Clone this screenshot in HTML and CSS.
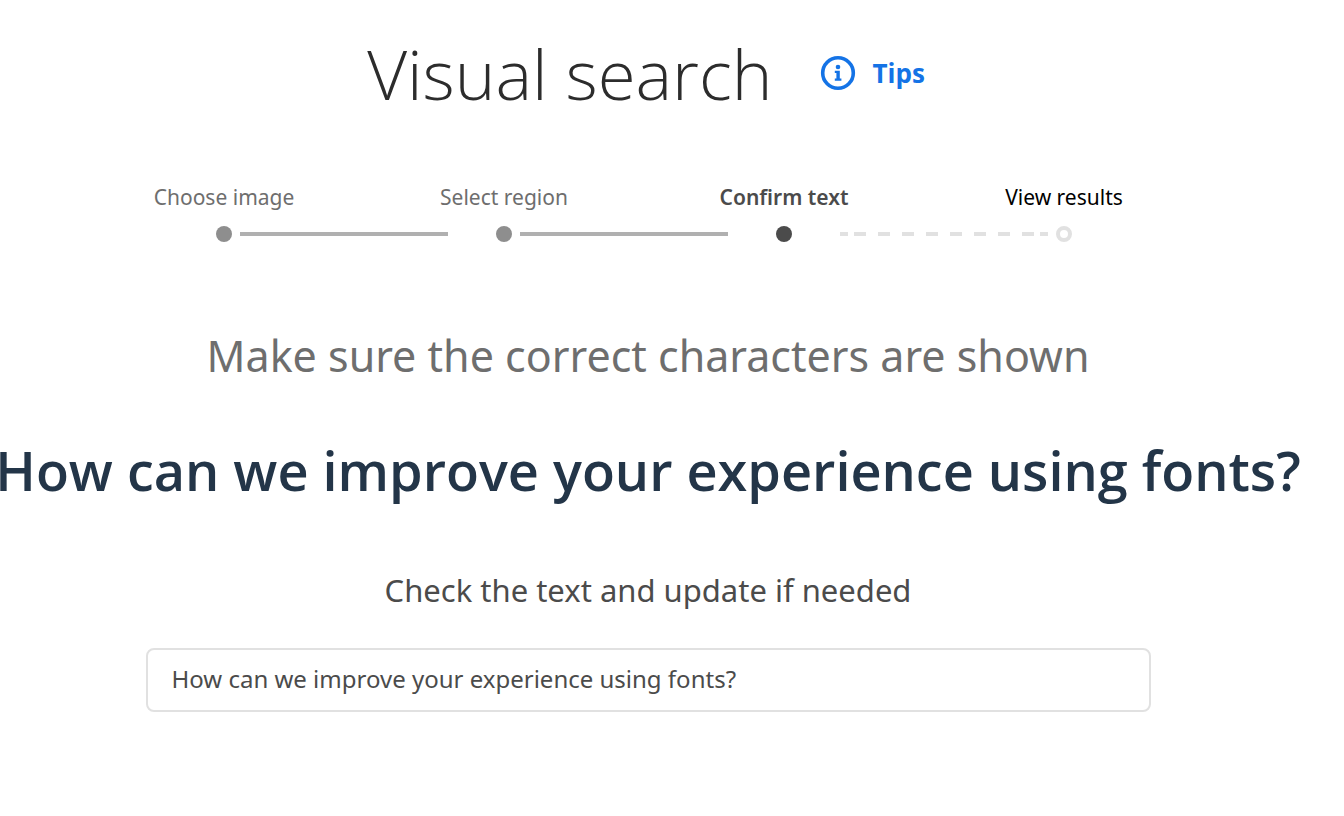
FILE: index.html
```html
<!DOCTYPE html>
<html lang="en">
<head>
<meta charset="utf-8">
<meta name="viewport" content="width=device-width, initial-scale=1">
<title>Visual search</title>
<link rel="stylesheet" href="styles.css">
</head>
<body>
<main class="page">
  <header class="header">
    <h1 class="title">Visual search</h1>
    <button class="tips" type="button">
      <svg class="tips-icon" viewBox="0 0 36 36" aria-hidden="true">
        <circle cx="18" cy="18" r="15.3" fill="none" stroke="currentColor" stroke-width="3.6"/>
        <circle cx="18" cy="12" r="2.3" fill="currentColor"/>
        <path d="M14.8 15.8h5v7.8h1.6v2.2h-6.6v-2.2h1.6V18h-1.6z" fill="currentColor"/>
      </svg>
      <span>Tips</span>
    </button>
  </header>
  <ol class="steps">
    <li class="step done"><span class="label">Choose image</span><span class="dot"></span></li>
    <li class="step done"><span class="label">Select region</span><span class="dot"></span></li>
    <li class="step current" aria-current="step"><span class="label">Confirm text</span><span class="dot"></span></li>
    <li class="step next"><span class="label">View results</span><span class="dot"></span></li>
  </ol>
  <h2 class="heading">Make sure the correct characters are shown</h2>
  <p class="sample">How can we improve your experience using fonts?</p>
  <form class="form">
    <label class="prompt" for="text">Check the text and update if needed</label>
    <input class="field" id="text" type="text" value="How can we improve your experience using fonts?">
  </form>
</main>
</body>
</html>
```
FILE: styles.css
```css
* {
  box-sizing: border-box;
}

body {
  margin: 0;
  background: #fff;
  color: #4b4b4b;
  font-family: "Noto Sans", "Open Sans", sans-serif;
}

.page {
  display: flex;
  flex-direction: column;
  align-items: center;
  padding: 24px 48px 48px 0;
}

.header {
  display: flex;
  align-items: center;
  gap: 48px;
  padding-right: 4px;
}

.title {
  margin: 0;
  color: #2c2c2c;
  font-family: "Open Sans", sans-serif;
  font-size: 69px;
  font-weight: 330;
  line-height: 98px;
}

.tips {
  display: flex;
  align-items: center;
  gap: 16px;
  padding: 0;
  border: 0;
  background: none;
  color: #1473e6;
  font-family: "Open Sans", sans-serif;
  font-size: 26px;
  font-weight: 700;
}

.tips-icon {
  width: 36px;
  height: 36px;
}

.steps {
  display: grid;
  grid-template-columns: repeat(4, 280px);
  margin: 57px 0 0;
  padding: 0 8px 0 0;
  list-style: none;
}

.step {
  position: relative;
  display: flex;
  flex-direction: column;
  align-items: center;
  gap: 11px;
  color: #6e6e6e;
  font-size: 21px;
  line-height: 36px;
}

.dot {
  width: 16px;
  height: 16px;
  border-radius: 50%;
  background: #8e8e8e;
}

.done::after,
.current::after {
  content: "";
  position: absolute;
  bottom: 6px;
  left: 156px;
  width: 208px;
  height: 4px;
  background: #b0b0b0;
}

.current {
  color: #4b4b4b;
  font-weight: 600;
}

.current .dot {
  background: #4b4b4b;
}

.current::after {
  left: 196px;
  background:
    linear-gradient(#e1e1e1, #e1e1e1) left / 8px 4px no-repeat,
    linear-gradient(#e1e1e1, #e1e1e1) right / 8px 4px no-repeat,
    repeating-linear-gradient(90deg, #e1e1e1 0 12px, transparent 12px 24px) center / 180px 4px no-repeat;
}

.next {
  color: #000;
}

.next .dot {
  border: 4px solid #e1e1e1;
  background: #fff;
}

.heading {
  margin: 81px 0 0;
  color: #6e6e6e;
  font-size: 43px;
  font-weight: 400;
  line-height: 66px;
  white-space: nowrap;
}

.sample {
  margin: 45px 0 0;
  color: #233548;
  font-family: "Open Sans", sans-serif;
  font-size: 54px;
  font-weight: 600;
  line-height: 72px;
  white-space: nowrap;
}

.form {
  display: flex;
  flex-direction: column;
  align-items: center;
  width: 100%;
  max-width: 1005px;
  margin-top: 60px;
}

.prompt {
  font-size: 31px;
  line-height: 48px;
}

.field {
  width: 100%;
  height: 64px;
  margin-top: 34px;
  padding: 0 24px 4px;
  border: 2px solid #e1e1e1;
  border-radius: 8px;
  color: #4b4b4b;
  font: inherit;
  font-size: 24px;
}
```
